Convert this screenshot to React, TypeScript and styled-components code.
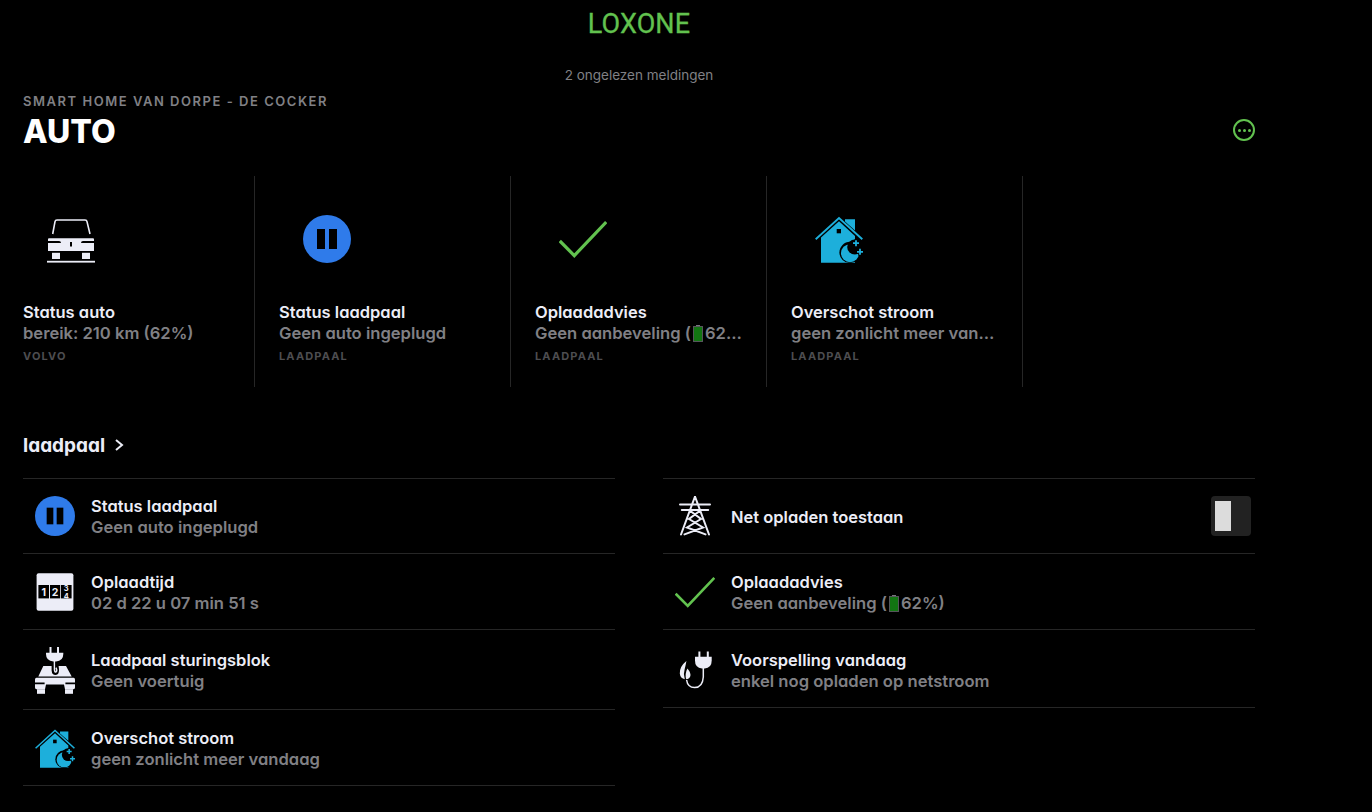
import * as React from "react";
import styled, { createGlobalStyle } from "styled-components";

const GlobalStyle = createGlobalStyle`
  html, body {
    margin: 0;
    background: #000;
  }
  body {
    font-family: Inter, "Noto Sans", sans-serif;
    font-feature-settings: "cv11" on;
  }
`;

const WHITE = "#ecedf7";
const BLUE = "#2f7bea";
const CYAN = "#1dafdb";
const GREEN = "#62c24f";

function CarIcon() {
  return (
    <svg width="48" height="48" viewBox="0 0 48 48">
      <path d="M5.7 19 L8 6.6 Q8.3 5 10 5 H38 Q39.7 5 40 6.6 L43 19" fill="none" stroke={WHITE} strokeWidth="1.6" />
      <path d="M2 23.3 H46 Q47 23.3 47 24.3 V26 H36 Q34 26 34 28 H14 Q14 26 12 26 H1 V24.3 Q1 23.3 2 23.3 Z" fill={WHITE} />
      <path d="M1 28 H47 V36 H1 Z" fill={WHITE} />
      <rect x="23" y="27" width="2" height="4.5" fill="#000" />
      <rect x="5" y="37.8" width="8" height="6.2" fill={WHITE} />
      <rect x="35" y="37.8" width="8" height="6.2" fill={WHITE} />
      <rect x="0" y="45.8" width="48" height="1.8" fill={WHITE} />
    </svg>
  );
}

function PauseIcon({ size }: { size: number }) {
  return (
    <svg width={size} height={size} viewBox="0 0 48 48">
      <circle cx="24" cy="24" r="24" fill={BLUE} />
      <rect x="14" y="14" width="8" height="20" fill="#000" />
      <rect x="26" y="14" width="8" height="20" fill="#000" />
    </svg>
  );
}

function CheckIcon({ size }: { size: number }) {
  return (
    <svg width={size} height={size} viewBox="0 0 48 48">
      <path d="M0.8 26 L15.3 40.6 L47.2 7" fill="none" stroke={GREEN} strokeWidth="3.2" />
    </svg>
  );
}

function HouseIcon({ size }: { size: number }) {
  return (
    <svg width={size} height={size} viewBox="0 0 48 48">
      <path d="M0.7 24.3 L24 3 L47.3 24.3" fill="none" stroke={CYAN} strokeWidth="1.9" />
      <path d="M6 47.7 V22.6 L24 6.3 L40 21 V47.7 Z" fill={CYAN} />
      <path d="M30 4.2 H40 V15.4 L30 6.6 Z" fill={CYAN} />
      <rect x="21.7" y="14" width="4.3" height="4.3" fill="#000" />
      <circle cx="35" cy="37.4" r="10.6" fill="#000" />
      <circle cx="35" cy="38.2" r="9" fill={CYAN} />
      <circle cx="39.8" cy="32" r="7.6" fill="#000" />
      <path d="M41 24.6 V31.8 M37.4 28.2 H44.6 M45 33.2 V40.4 M41.4 36.8 H48" stroke="#000" strokeWidth="3.6" />
      <path d="M41 25.2 V31.2 M38 28.2 H44 M45 33.8 V39.8 M42 36.8 H48" stroke={CYAN} strokeWidth="1.8" />
    </svg>
  );
}

function CounterIcon() {
  return (
    <svg width="40" height="40" viewBox="0 0 40 40">
      <defs>
        <clipPath id="lastDigit">
          <rect x="25.8" y="13" width="10.8" height="13.4" />
        </clipPath>
      </defs>
      <rect x="1.6" y="1.2" width="36.8" height="37.6" rx="2" fill={WHITE} />
      <rect x="3.4" y="13" width="10.6" height="13.4" fill="#000" />
      <rect x="15" y="13" width="10" height="13.4" fill="#000" />
      <rect x="25.8" y="13" width="10.8" height="13.4" fill="#000" />
      <Digit x="8.7" y="24" fontSize="10.5">1</Digit>
      <Digit x="20" y="24" fontSize="10.5">2</Digit>
      <g clipPath="url(#lastDigit)">
        <Digit x="31.2" y="19" fontSize="7.5">3</Digit>
        <Digit x="31.2" y="27" fontSize="7.5">4</Digit>
      </g>
    </svg>
  );
}

function ChargeCarIcon() {
  return (
    <svg width="40" height="48" viewBox="0 0 40 48">
      <path d="M14.5 1 H16.5 V7 H14.5 Z M22 1 H24 V7 H22 Z" fill={WHITE} />
      <path d="M11 6.7 H28.3 V8 Q28.3 15 21 15.4 H18.4 Q11 15 11 8 Z" fill={WHITE} />
      <path d="M8.3 20 H16.6 V24.4 Q17 29 20.6 29 Q24.6 28.6 24 23 L23.6 20 H31 L36.7 30.4 H3.3 Z" fill={WHITE} />
      <path d="M19.4 15 V23.4 Q19.6 26.4 21 26 Q22.6 25 21 21.6" fill="none" stroke={WHITE} strokeWidth="1.4" />
      <path d="M1.5 31.8 H38.5 Q40 31.8 40 33.4 V36.6 H30.4 V38.2 H40 V41.5 Q40 43.2 38.5 43.2 H30 L29 38.6 H11 L10 43.2 H1.5 Q0 43.2 0 41.5 V38.2 H9.6 V36.6 H0 V33.4 Q0 31.8 1.5 31.8 Z" fill={WHITE} />
      <rect x="2" y="43.2" width="8" height="4.6" fill={WHITE} />
      <rect x="30" y="43.2" width="8" height="4.6" fill={WHITE} />
    </svg>
  );
}

function TowerIcon() {
  return (
    <svg width="40" height="40" viewBox="0 0 40 40">
      <path
        d="M20 0.5 L6 38.5 M20 0.5 L34 38.5 M5 8.6 H35 M6.8 14 H33.2 M14 14 L26 23 L12 31.5 L30.5 38.4 M26 14 L14 23 L28 31.5 L9.5 38.4"
        fill="none"
        stroke={WHITE}
        strokeWidth="2"
        strokeLinecap="round"
      />
    </svg>
  );
}

function PlugLeafIcon() {
  return (
    <svg width="40" height="40" viewBox="0 0 40 40">
      <path d="M23.4 1.6 H25.4 V7 H23.4 Z M31.8 1.6 H33.8 V7 H31.8 Z" fill={WHITE} />
      <path d="M20 6.7 H36.7 V10.5 Q36.7 18 29.6 18.4 H27 Q20 18 20 10.5 Z" fill={WHITE} />
      <path d="M28.3 18 V27 Q27.6 37.6 19.6 37.6 Q12.6 37.4 11.6 30" fill="none" stroke={WHITE} strokeWidth="1.5" />
      <path d="M11.4 11 Q4.4 16.6 4.8 23.6 Q5.4 28.6 9.8 29.2 Q8 24 9.6 19.4 Q10.6 15.8 11.4 11 Z" fill={WHITE} />
      <path d="M12.4 18.4 Q16 22.6 15.4 26 Q14.6 29 11.2 29.2 Q9.6 24 12.4 18.4 Z" fill={WHITE} />
    </svg>
  );
}

function Battery() {
  return (
    <BatteryGlyph width="10" height="17" viewBox="0 0 10 17">
      <rect x="3" y="0" width="4" height="2" fill="#77777c" />
      <rect x="0.5" y="1.5" width="9" height="15" fill="#127512" stroke="#55555a" />
    </BatteryGlyph>
  );
}

const Digit = styled.text`
  fill: ${WHITE};
  font-family: Inter, sans-serif;
  font-weight: 700;
  text-anchor: middle;
`;

const Page = styled.div`
  width: 1232px;
  min-height: 812px;
  padding: 0 117px 0 23px;
  background: #000;
  display: flex;
  flex-direction: column;
`;

const Logo = styled.div`
  height: 48px;
  display: flex;
  align-items: center;
  justify-content: center;
  font-family: Roboto, sans-serif;
  font-size: 27px;
  font-weight: 400;
  letter-spacing: 0.1px;
  -webkit-text-stroke: 0.3px ${GREEN};
  color: ${GREEN};
`;

const Notice = styled.div`
  height: 18px;
  margin-top: 18px;
  line-height: 18px;
  text-align: center;
  font-size: 13.5px;
  color: #808085;
`;

const Eyebrow = styled.div`
  height: 14px;
  margin-top: 10px;
  line-height: 14px;
  font-size: 13px;
  font-weight: 600;
  letter-spacing: 1.53px;
  color: #808085;
`;

const TitleRow = styled.div`
  height: 36px;
  margin-top: 5px;
  display: flex;
  align-items: flex-start;
  justify-content: space-between;
`;

const Title = styled.h1`
  margin: 1px 0 0;
  font-size: 32px;
  line-height: 36px;
  font-weight: 800;
  color: #fff;
`;

const MoreButton = styled.div`
  width: 22px;
  height: 22px;
  margin-top: 6px;
  box-sizing: border-box;
  border: 2px solid ${GREEN};
  border-radius: 50%;
  display: flex;
  align-items: center;
  justify-content: center;
  gap: 2px;
`;

const Dot = styled.span`
  width: 3px;
  height: 3px;
  border-radius: 50%;
  background: ${GREEN};
`;

const Cards = styled.div`
  margin-top: 27px;
  display: grid;
  grid-template-columns: 232px repeat(3, 256px);
`;

const Card = styled.div`
  box-sizing: border-box;
  height: 211px;
  min-width: 0;
  padding: 39px 24px 0;
  border-right: 1px solid #262626;

  &:first-child {
    padding-left: 0;
  }
`;

const CardIcon = styled.div`
  width: 48px;
  height: 48px;
  margin-left: 24px;
  margin-bottom: 39px;
`;

const RowTitle = styled.div`
  font-size: 16.5px;
  line-height: 21px;
  font-weight: 600;
  color: ${WHITE};
  white-space: nowrap;
  overflow: hidden;
  text-overflow: ellipsis;
`;

const RowSub = styled.div`
  font-size: 16.6px;
  line-height: 21px;
  font-weight: 600;
  color: #808085;
  white-space: nowrap;
  overflow: hidden;
  text-overflow: ellipsis;
`;

const BatteryGlyph = styled.svg`
  display: inline-block;
  vertical-align: -3px;
  margin: 0 2px;
`;

const CardLabel = styled.div`
  margin-top: 5px;
  font-size: 11px;
  line-height: 14px;
  font-weight: 700;
  letter-spacing: 1.15px;
  color: #4d4d50;
`;

const SectionHead = styled.div`
  height: 24px;
  margin-top: 46px;
  display: flex;
  align-items: center;
  gap: 9px;
  font-size: 19px;
  font-weight: 700;
  color: ${WHITE};
`;

const Columns = styled.div`
  margin-top: 21px;
  display: grid;
  grid-template-columns: 592px 592px;
  column-gap: 48px;
  align-items: start;
`;

const Column = styled.div`
  border-top: 1px solid #262626;
`;

const Row = styled.div<{ $height: number; $shift?: number }>`
  box-sizing: border-box;
  height: ${(p) => p.$height}px;
  padding: ${(p) => p.$shift ?? 0}px 4px 0 12px;
  border-bottom: 1px solid #262626;
  display: flex;
  align-items: center;
  gap: 16px;
`;

const RowIcon = styled.div`
  flex: none;
  width: 40px;
  display: flex;
  justify-content: center;
`;

const RowText = styled.div`
  flex: 1;
  min-width: 0;
  padding-top: 2px;
`;

const Toggle = styled.div`
  flex: none;
  box-sizing: border-box;
  width: 40px;
  height: 40px;
  padding: 5px 4px;
  border-radius: 4px;
  background: #222;
`;

const Knob = styled.div`
  width: 16px;
  height: 30px;
  background: #dcdcdc;
`;

type CardData = {
  icon: React.ReactNode;
  title: string;
  sub: React.ReactNode;
  label: string;
};

const advice = (
  <>
    Geen aanbeveling (<Battery />
    62%)
  </>
);

const cards: CardData[] = [
  { icon: <CarIcon />, title: "Status auto", sub: "bereik: 210 km (62%)", label: "VOLVO" },
  { icon: <PauseIcon size={48} />, title: "Status laadpaal", sub: "Geen auto ingeplugd", label: "LAADPAAL" },
  { icon: <CheckIcon size={48} />, title: "Oplaadadvies", sub: advice, label: "LAADPAAL" },
  { icon: <HouseIcon size={48} />, title: "Overschot stroom", sub: "geen zonlicht meer vandaag", label: "LAADPAAL" },
];

type RowData = {
  icon: React.ReactNode;
  title: string;
  sub?: React.ReactNode;
  height: number;
  shift?: number;
  toggle?: boolean;
};

const leftRows: RowData[] = [
  { icon: <PauseIcon size={40} />, title: "Status laadpaal", sub: "Geen auto ingeplugd", height: 75 },
  { icon: <CounterIcon />, title: "Oplaadtijd", sub: "02 d 22 u 07 min 51 s", height: 76 },
  { icon: <ChargeCarIcon />, title: "Laadpaal sturingsblok", sub: "Geen voertuig", height: 80 },
  { icon: <HouseIcon size={40} />, title: "Overschot stroom", sub: "geen zonlicht meer vandaag", height: 76 },
];

const rightRows: RowData[] = [
  { icon: <TowerIcon />, title: "Net opladen toestaan", height: 75, toggle: true },
  { icon: <CheckIcon size={40} />, title: "Oplaadadvies", sub: advice, height: 76 },
  { icon: <PlugLeafIcon />, title: "Voorspelling vandaag", sub: "enkel nog opladen op netstroom", height: 78, shift: 2 },
];

function renderRows(rows: RowData[]) {
  return rows.map((row) => (
    <Row key={row.title} $height={row.height} $shift={row.shift}>
      <RowIcon>{row.icon}</RowIcon>
      <RowText>
        <RowTitle>{row.title}</RowTitle>
        {row.sub && <RowSub>{row.sub}</RowSub>}
      </RowText>
      {row.toggle && (
        <Toggle>
          <Knob />
        </Toggle>
      )}
    </Row>
  ));
}

export default function App() {
  return (
    <Page>
      <GlobalStyle />
      <Logo>LOXONE</Logo>
      <Notice>2 ongelezen meldingen</Notice>
      <Eyebrow>SMART HOME VAN DORPE - DE COCKER</Eyebrow>
      <TitleRow>
        <Title>AUTO</Title>
        <MoreButton>
          <Dot />
          <Dot />
          <Dot />
        </MoreButton>
      </TitleRow>
      <Cards>
        {cards.map((card) => (
          <Card key={card.title}>
            <CardIcon>{card.icon}</CardIcon>
            <RowTitle>{card.title}</RowTitle>
            <RowSub>{card.sub}</RowSub>
            <CardLabel>{card.label}</CardLabel>
          </Card>
        ))}
      </Cards>
      <SectionHead>
        laadpaal
        <svg width="10" height="14" viewBox="0 0 10 14">
          <path d="M2 2 L8 7 L2 12" fill="none" stroke={WHITE} strokeWidth="2" />
        </svg>
      </SectionHead>
      <Columns>
        <Column>{renderRows(leftRows)}</Column>
        <Column>{renderRows(rightRows)}</Column>
      </Columns>
    </Page>
  );
}
